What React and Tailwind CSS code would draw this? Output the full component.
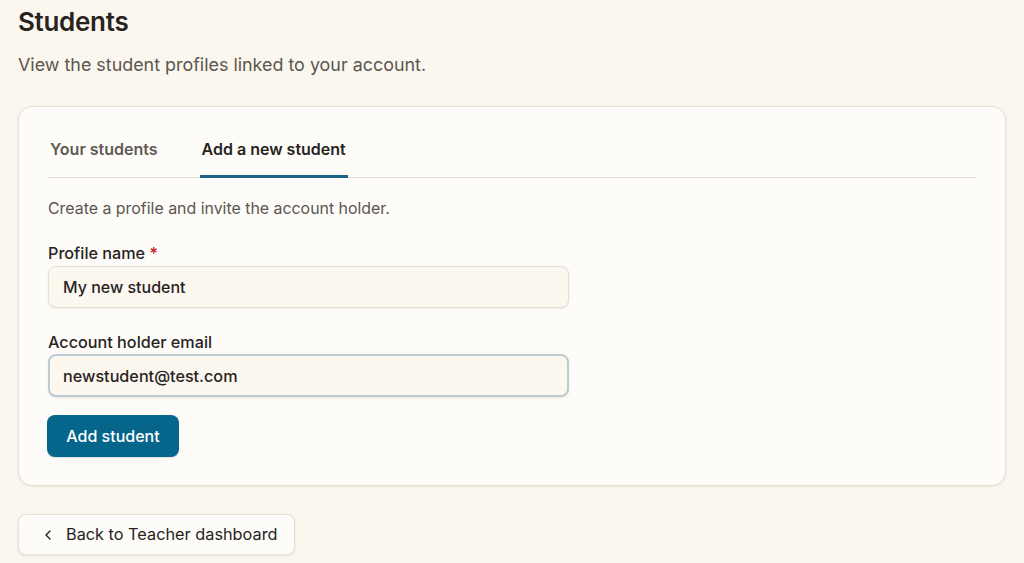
import { ChevronLeft } from "lucide-react";

export default function App() {
  return (
    <main
      className="min-h-screen bg-[#fbf7ee] px-[18px] pt-[6px] pb-8 text-[#27231e]"
      style={{ fontFamily: "Inter, 'Noto Sans', sans-serif" }}
    >
      <h1 className="text-[26px] font-semibold leading-[32px] tracking-[-0.3px]">
        Students
      </h1>
      <p className="mt-[14px] text-[17.9px] leading-[26px] text-[#5b564f]">
        View the student profiles linked to your account.
      </p>

      <section className="mt-[28px] rounded-[14px] border border-[#e4e0d7] bg-[#fefcf8] px-[29px] pt-[30px] pb-[28px] shadow-[0_1px_3px_rgba(60,50,30,0.08)]">
        <div className="flex gap-[40px] border-b border-[#e2ded6]">
          <button className="-mb-px border-b-[3px] border-transparent px-[2px] pb-[14px] text-[16px] font-semibold leading-[24px] text-[#5f5a52]">
            Your students
          </button>
          <button className="-mb-px border-b-[3px] border-[#1d6587] px-[2px] pb-[14px] text-[16px] font-semibold leading-[24px] text-[#27231e]">
            Add a new student
          </button>
        </div>

        <p className="mt-[20px] text-[15.9px] leading-[22px] text-[#5b564f]">
          Create a profile and invite the account holder.
        </p>

        <form className="mt-[22px] w-[521px]">
          <label className="block text-[16.2px] font-medium leading-[22px]">
            Profile name <span className="text-[#c8102e]">*</span>
          </label>
          <input
            type="text"
            defaultValue="My new student"
            className="mt-[2px] h-[42px] w-full rounded-[8px] border border-[#e3ddd3] bg-[#fcf7ef] px-[14px] text-[16px] font-medium text-[#27231e] shadow-[0_1px_2px_rgba(60,50,30,0.08)] outline-none"
          />

          <label className="mt-[23px] block text-[16.2px] font-medium leading-[22px]">
            Account holder email
          </label>
          <input
            type="email"
            defaultValue="newstudent@test.com"
            className="mt-[1px] h-[43px] w-full rounded-[8px] border-2 border-[#bccbd1] bg-[#fcf7ef] px-[13px] text-[16.2px] font-medium text-[#27231e] shadow-[0_1px_2px_rgba(60,50,30,0.1)] outline-none"
          />

          <button
            type="button"
            className="-ml-px mt-[18px] h-[42px] w-[132px] rounded-[8px] bg-[#06658b] text-[16px] font-medium text-white shadow-[0_1px_2px_rgba(0,0,0,0.12)]"
          >
            Add student
          </button>
        </form>
      </section>

      <button
        type="button"
        className="mt-[28px] flex h-[41px] w-[277px] items-center gap-[10px] rounded-[8px] border border-[#e4e0d7] bg-[#fefcf8] pl-[21px] text-[16.3px] font-normal text-[#27231e] shadow-[0_1px_3px_rgba(60,50,30,0.1)]"
      >
        <ChevronLeft className="h-[16px] w-[16px]" strokeWidth={2} />
        Back to Teacher dashboard
      </button>
    </main>
  );
}
